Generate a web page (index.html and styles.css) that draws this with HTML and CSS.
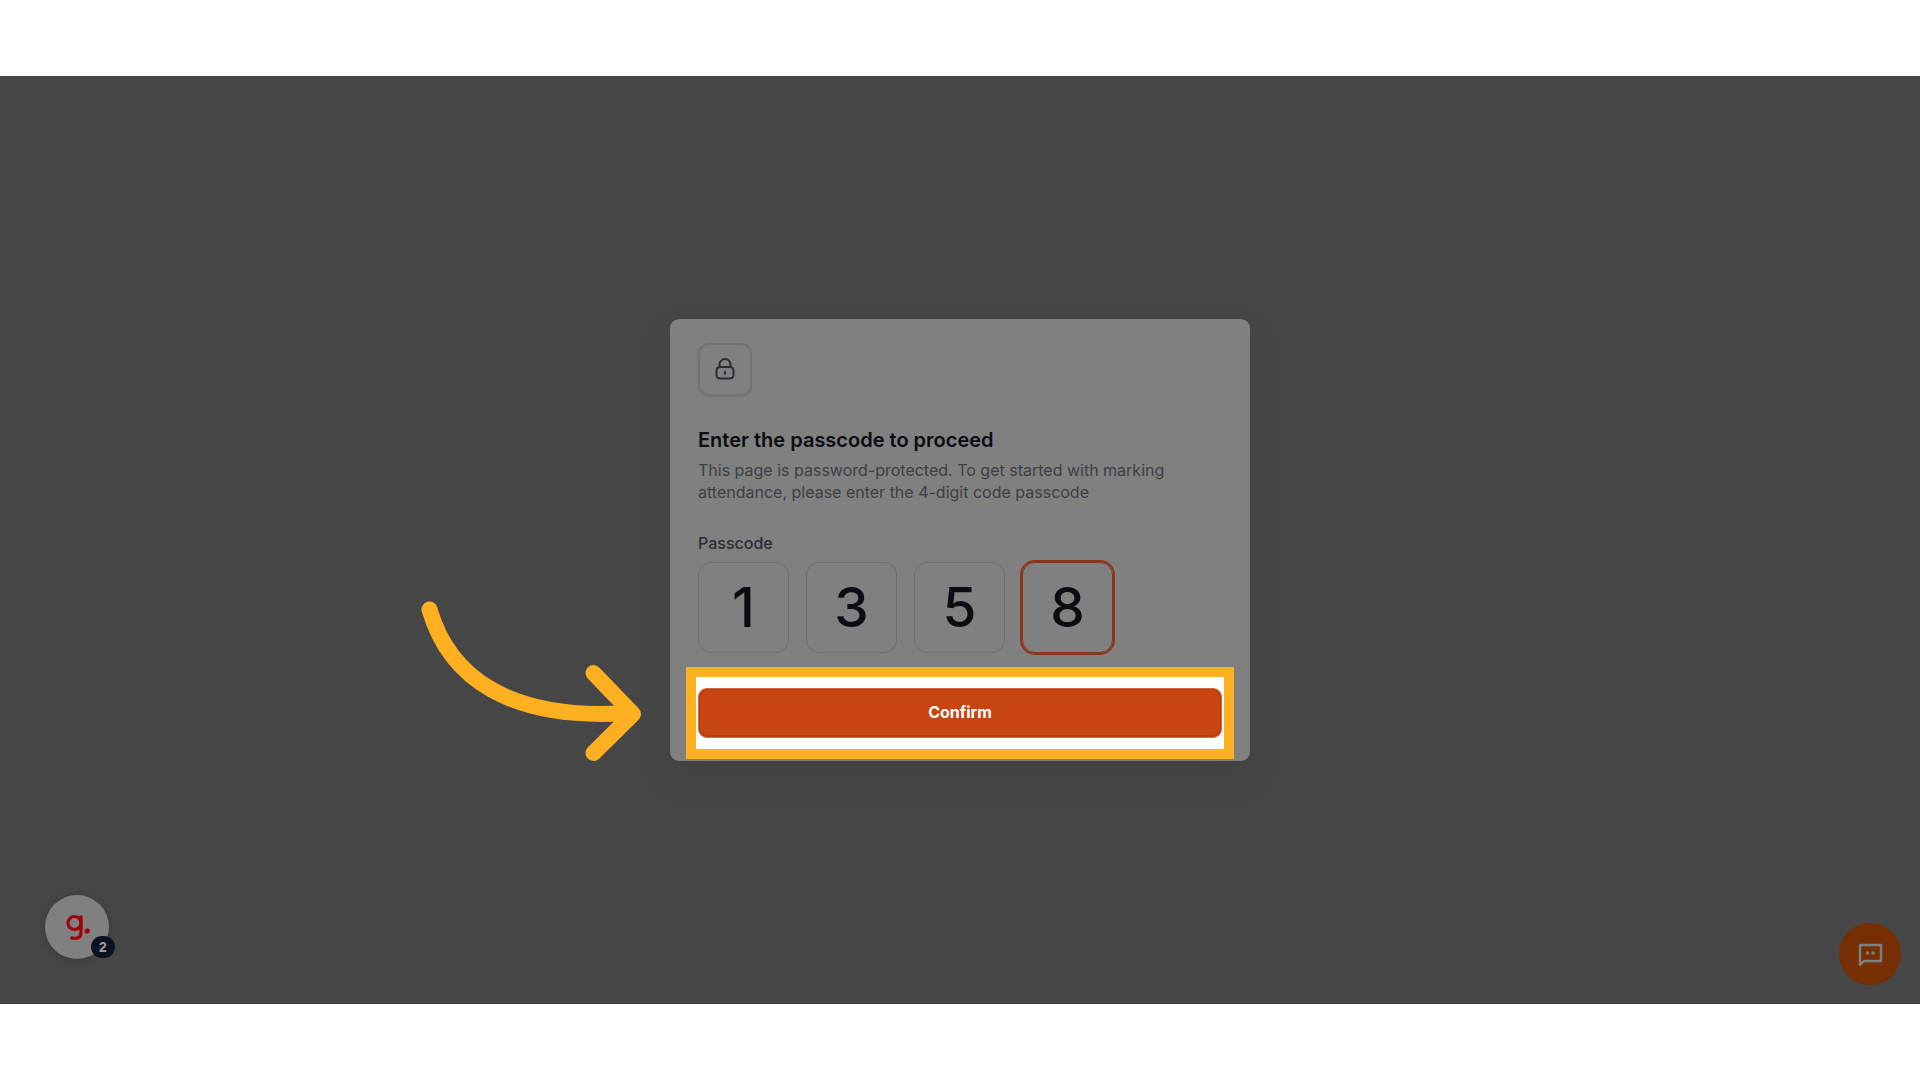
FILE: index.html
```
<!DOCTYPE html>
<html lang="en">
<head>
  <meta charset="UTF-8" />
  <meta name="viewport" content="width=device-width, initial-scale=1.0" />
  <title>Enter the passcode</title>
  <link rel="stylesheet" href="styles.css">
</head>
<body>
  <main class="stage">
    <form class="card">
      <div class="card-icon">
        <svg width="24" height="24" viewBox="0 0 24 24" fill="none" stroke="currentColor" stroke-width="2" stroke-linecap="round" stroke-linejoin="round">
          <rect x="3.500" y="10" width="17" height="11.500" rx="3.500" />
          <path d="M6.500 10V7.500a5.500 5.500 0 0 1 11 0v2.500" />
          <path d="M12 14.800v2" />
        </svg>
      </div>

      <h1>Enter the passcode to proceed</h1>
      <p class="description">This page is password-protected. To get started with marking attendance, please enter the 4-digit code passcode</p>

      <fieldset class="passcode">
        <legend>Passcode</legend>
        <div class="digits">
          <input type="text" class="digit" maxlength="1" value="1" aria-label="Digit 1" />
          <input type="text" class="digit" maxlength="1" value="3" aria-label="Digit 2" />
          <input type="text" class="digit" maxlength="1" value="5" aria-label="Digit 3" />
          <input type="text" class="digit active" maxlength="1" value="8" aria-label="Digit 4" />
        </div>
      </fieldset>

      <div class="highlight">
        <button type="button" class="confirm">Confirm</button>
      </div>

      <svg class="arrow" width="220" height="160" viewBox="0 0 220 160" fill="none" stroke="currentColor" stroke-width="16" stroke-linecap="round" stroke-linejoin="round">
        <path d="M8.500 8.500C28 76 88 120 207 112" />
        <path d="M172.500 72L212 113L172.500 152" />
      </svg>
    </form>

    <button type="button" class="guide" aria-label="Guides">
      <svg width="26" height="28" viewBox="0 0 26 28" fill="none" stroke="#a00008" stroke-width="3.200">
        <circle cx="10.500" cy="10" r="6.500" />
        <path d="M17 2.500V19.500C17 23.500 14.500 25.500 11 25.500C9 25.500 8 25.200 6.500 24.600" />
        <circle cx="23.200" cy="18" r="2.600" fill="#a00008" stroke="none" />
      </svg>
      <span class="badge">2</span>
    </button>

    <button type="button" class="chat" aria-label="Chat">
      <svg width="26" height="26" viewBox="0 0 26 26" fill="none" stroke="currentColor" stroke-width="2.400">
        <path d="M3 24V4H24V20H7Z" stroke-linejoin="round" />
        <circle cx="10.500" cy="12" r="1.800" fill="currentColor" stroke="none" />
        <circle cx="16" cy="12" r="1.800" fill="currentColor" stroke="none" />
      </svg>
    </button>
  </main>
</body>
</html>
```
FILE: styles.css
```
* {
  box-sizing: border-box;
}
body {
  font-family: Inter, sans-serif;
  background-color: #fff;
  margin: 0;
  padding: 76px 0;
  min-height: 100vh;
  display: flex;
}
.stage {
  position: relative;
  flex: 1;
  display: flex;
  align-items: center;
  justify-content: center;
  background-color: #464646;
  border-bottom: 1px solid #3c383c;
}
.card {
  position: relative;
  width: 100%;
  max-width: 580px;
  padding: 24px 28px 2px;
  background-color: #808080;
  border-radius: 9px;
  box-shadow: 0 16px 40px rgba(0,0,0,0.08);
}
.card-icon {
  width: 54px;
  height: 53px;
  display: flex;
  align-items: center;
  justify-content: center;
  border: 2px solid #737374;
  border-radius: 11px;
  box-shadow: 0 1px 2px rgba(0,0,0,0.1);
  color: #2a2c33;
}
h1 {
  margin: 30px 0 5px;
  font-size: 20px;
  line-height: 28px;
  font-weight: 600;
  color: #0b0c12;
}
.description {
  margin: 0;
  font-size: 16px;
  line-height: 22px;
  color: #3c3e45;
}
.passcode {
  margin: 29px 0 14px;
  padding: 0;
  border: none;
}
.passcode legend {
  padding: 0;
  margin-bottom: 8px;
  font-size: 16px;
  line-height: 22px;
  font-weight: 500;
  color: #2a2c33;
}
.digits {
  display: flex;
  gap: 17px;
}
.digit {
  width: 91px;
  height: 91px;
  padding: 0;
  border: 1px solid #6f6f70;
  border-radius: 13px;
  background: none;
  font-family: inherit;
  font-size: 55px;
  font-weight: 500;
  text-align: center;
  color: #0b0c12;
}
.digit.active {
  border-color: #8a3519;
  box-shadow: 0 0 0 2px #8a3519;
}
.highlight {
  margin: 0 -12px;
  padding: 11px 2px;
  border: 10px solid #ffb020;
  background-color: #fff;
}
.confirm {
  display: block;
  width: 100%;
  height: 50px;
  padding: 0 0 2px;
  border: 1px solid #d4683f;
  border-radius: 9px;
  background-color: #c84412;
  box-shadow: inset 0 0 0 1px #b03d13, inset 0 -2px 0 #b03d13;
  font-family: inherit;
  font-size: 16px;
  font-weight: 700;
  color: #fff;
}
.arrow {
  position: absolute;
  right: calc(100% + 29px);
  bottom: 0;
  color: #ffb020;
}
.guide,
.chat {
  position: absolute;
  display: flex;
  align-items: center;
  justify-content: center;
  padding: 0;
  border: none;
  border-radius: 50%;
}
.guide {
  left: 45px;
  bottom: 44px;
  width: 64px;
  height: 64px;
  background-color: #808080;
  box-shadow: 0 2px 8px rgba(0,0,0,0.2);
}
.badge {
  position: absolute;
  right: -6px;
  bottom: 1px;
  width: 24px;
  border-radius: 12px;
  background-color: #0b1220;
  font-family: inherit;
  font-size: 14px;
  line-height: 22px;
  font-weight: 800;
  color: #a0a0a0;
}
.chat {
  right: 19px;
  bottom: 18px;
  width: 62px;
  height: 62px;
  background-color: #752f02;
  color: #808080;
}
```
